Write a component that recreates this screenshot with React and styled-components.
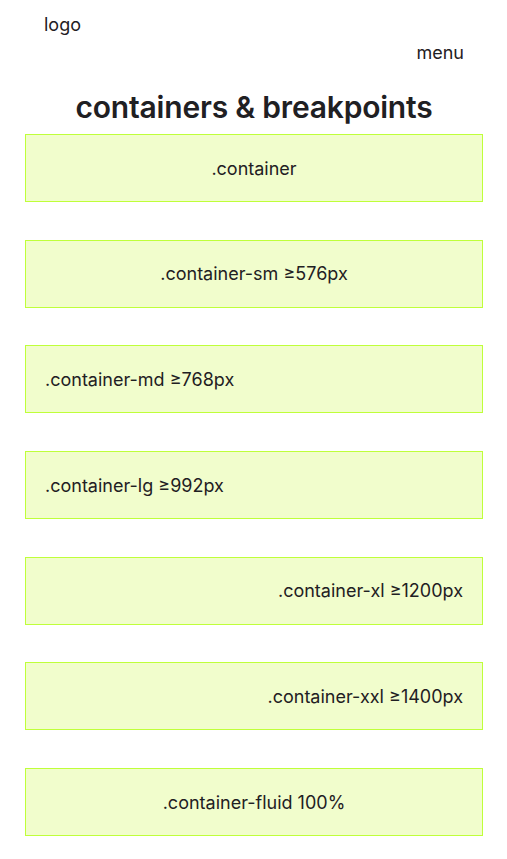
import React from "react";
import styled, { createGlobalStyle } from "styled-components";

const GlobalStyle = createGlobalStyle`
  body {
    margin: 0;
    background: #fff;
    font-family: Inter, "Noto Sans", sans-serif;
    color: #1f2023;
  }
`;

const Page = styled.div`
  padding: 0 24px 0 25px;
`;

const Header = styled.header`
  display: flex;
  flex-direction: column;
  padding: 13px 19px 0 19px;
  font-size: 18px;
`;

const Logo = styled.div`
  height: 24px;
  line-height: 24px;
`;

const Menu = styled.nav`
  align-self: flex-end;
  margin-top: 4px;
  line-height: 24px;
`;

const Title = styled.h1`
  margin: 24px 0 9px;
  text-align: center;
  font-size: 30px;
  font-weight: 600;
  line-height: 36px;
  letter-spacing: -0.2px;
`;

const List = styled.div`
  display: flex;
  flex-direction: column;
  gap: 37.7px;
`;

const Box = styled.div`
  display: flex;
  align-items: center;
  justify-content: ${(p) => p.$align};
  height: 66px;
  padding: 0 19px;
  border: 1px solid #bfff3a;
  background: #f1fdcc;
  font-size: 18px;
`;

const items = [
  { label: ".container", align: "center" },
  { label: ".container-sm \u2265576px", align: "center" },
  { label: ".container-md \u2265768px", align: "flex-start" },
  { label: ".container-lg \u2265992px", align: "flex-start" },
  { label: ".container-xl \u22651200px", align: "flex-end" },
  { label: ".container-xxl \u22651400px", align: "flex-end" },
  { label: ".container-fluid 100%", align: "center" },
];

export default function App() {
  return (
    <>
      <GlobalStyle />
      <Page>
        <Header>
          <Logo>logo</Logo>
          <Menu>menu</Menu>
        </Header>
        <Title>containers &amp; breakpoints</Title>
        <List>
          {items.map((it) => (
            <Box key={it.label} $align={it.align}>
              {it.label}
            </Box>
          ))}
        </List>
      </Page>
    </>
  );
}
